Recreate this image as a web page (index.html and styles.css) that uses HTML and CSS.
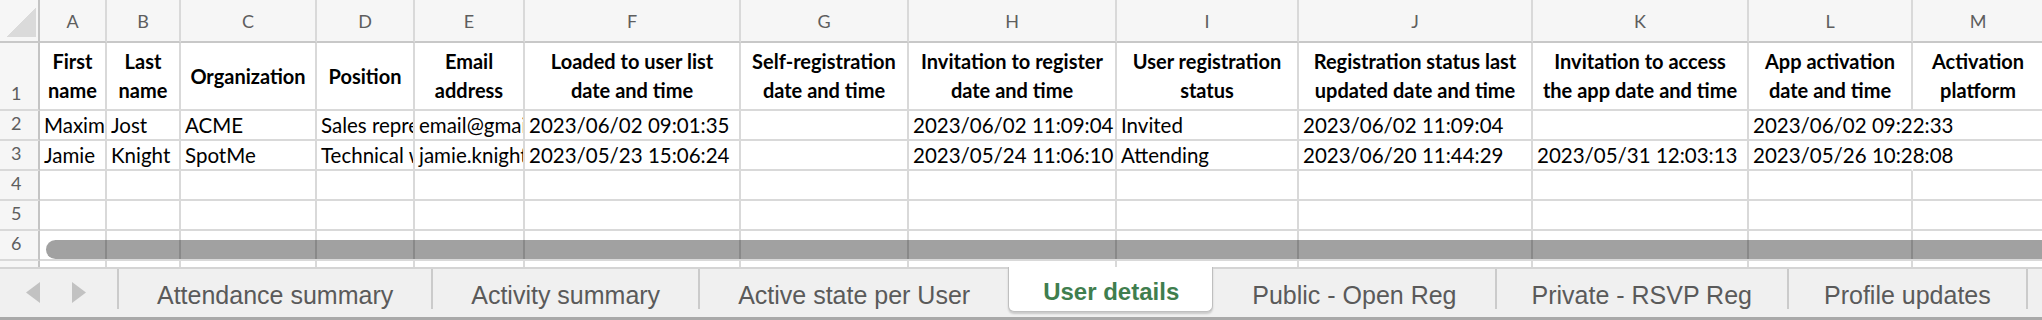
FILE: index.html
```html
<!DOCTYPE html>
<html>
<head>
  <meta charset="utf-8">
  <title>User details</title>
  <link rel="stylesheet" href="styles.css">
</head>
<body>
  <div class="sheet">
    <div class="grid">
      <div class="corner"></div>
      <div class="col">A</div>
      <div class="col">B</div>
      <div class="col">C</div>
      <div class="col">D</div>
      <div class="col">E</div>
      <div class="col">F</div>
      <div class="col">G</div>
      <div class="col">H</div>
      <div class="col">I</div>
      <div class="col">J</div>
      <div class="col">K</div>
      <div class="col">L</div>
      <div class="col">M</div>

      <div class="row">1</div>
      <div class="hd">First<br>name</div>
      <div class="hd">Last<br>name</div>
      <div class="hd">Organization</div>
      <div class="hd">Position</div>
      <div class="hd">Email<br>address</div>
      <div class="hd">Loaded to user list<br>date and time</div>
      <div class="hd">Self-registration<br>date and time</div>
      <div class="hd">Invitation to register<br>date and time</div>
      <div class="hd">User registration<br>status</div>
      <div class="hd">Registration status last<br>updated date and time</div>
      <div class="hd">Invitation to access<br>the app date and time</div>
      <div class="hd">App activation<br>date and time</div>
      <div class="hd">Activation<br>platform</div>

      <div class="row">2</div>
      <div class="c">Maxim</div>
      <div class="c">Jost</div>
      <div class="c">ACME</div>
      <div class="c">Sales representative</div>
      <div class="c">email@gmail.com</div>
      <div class="c">2023/06/02 09:01:35</div>
      <div class="c"></div>
      <div class="c">2023/06/02 11:09:04</div>
      <div class="c">Invited</div>
      <div class="c">2023/06/02 11:09:04</div>
      <div class="c"></div>
      <div class="c spill">2023/06/02 09:22:33</div>
      <div class="c"></div>

      <div class="row">3</div>
      <div class="c">Jamie</div>
      <div class="c">Knight</div>
      <div class="c">SpotMe</div>
      <div class="c">Technical writer</div>
      <div class="c">jamie.knight@spotme.com</div>
      <div class="c">2023/05/23 15:06:24</div>
      <div class="c"></div>
      <div class="c">2023/05/24 11:06:10</div>
      <div class="c">Attending</div>
      <div class="c">2023/06/20 11:44:29</div>
      <div class="c">2023/05/31 12:03:13</div>
      <div class="c spill">2023/05/26 10:28:08</div>
      <div class="c"></div>

      <div class="row">4</div>
      <div class="c"></div><div class="c"></div><div class="c"></div><div class="c"></div>
      <div class="c"></div><div class="c"></div><div class="c"></div><div class="c"></div>
      <div class="c"></div><div class="c"></div><div class="c"></div><div class="c"></div>
      <div class="c"></div>

      <div class="row">5</div>
      <div class="c"></div><div class="c"></div><div class="c"></div><div class="c"></div>
      <div class="c"></div><div class="c"></div><div class="c"></div><div class="c"></div>
      <div class="c"></div><div class="c"></div><div class="c"></div><div class="c"></div>
      <div class="c"></div>

      <div class="row">6</div>
      <div class="c"></div><div class="c"></div><div class="c"></div><div class="c"></div>
      <div class="c"></div><div class="c"></div><div class="c"></div><div class="c"></div>
      <div class="c"></div><div class="c"></div><div class="c"></div><div class="c"></div>
      <div class="c"></div>

      <div class="row">7</div>
      <div class="c"></div><div class="c"></div><div class="c"></div><div class="c"></div>
      <div class="c"></div><div class="c"></div><div class="c"></div><div class="c"></div>
      <div class="c"></div><div class="c"></div><div class="c"></div><div class="c"></div>
      <div class="c"></div>
    </div>
    <div class="hscroll"></div>
  </div>

  <div class="tabbar">
    <div class="nav">
      <svg width="117" height="48" viewBox="0 0 117 48">
        <polygon points="40,13 40,34 26,23.5" fill="#c2c2c2"/>
        <polygon points="72,13 72,34 86,23.5" fill="#c2c2c2"/>
      </svg>
    </div>
    <div class="tab">Attendance summary</div>
    <div class="tab">Activity summary</div>
    <div class="tab">Active state per User</div>
    <div class="tab on">User details</div>
    <div class="tab">Public - Open Reg</div>
    <div class="tab narrow">Private - RSVP Reg</div>
    <div class="tab narrow">Profile updates</div>
    <div class="tab end"></div>
  </div>
</body>
</html>
```

FILE: styles.css
```css
body {
  margin: 0;
  width: 2042px;
  height: 320px;
  overflow: hidden;
  background: #fff;
  font-family: Lato, "Open Sans", sans-serif;
}
.sheet {
  position: relative;
  height: 267px;
  overflow: hidden;
}
.grid {
  display: grid;
  grid-template-columns: 40px 67px 74px 136px 98px 110px 216px 168px 208px 182px 234px 216px 164px 132px;
  grid-template-rows: 43px 68px repeat(6, 30px);
}
.grid > div {
  box-sizing: border-box;
  border-right: 2px solid #d9d9d9;
  border-bottom: 2px solid #d9d9d9;
  overflow: hidden;
  white-space: nowrap;
}
.corner {
  background: #f6f6f6 linear-gradient(to bottom right, transparent 50%, #dadada 50%) 6px 8px / 30px 29px no-repeat;
}
.grid > .corner,
.grid > .col {
  border-bottom-color: #c8c8c8;
}
.grid > .corner,
.grid > .row {
  border-right-color: #c4c4c4;
}
.col {
  background: #f6f6f6;
  color: #5e5e5e;
  font-size: 18px;
  display: flex;
  align-items: center;
  justify-content: center;
}
.row {
  background: #f6f6f6;
  color: #5e5e5e;
  font-size: 18px;
  display: flex;
  align-items: flex-end;
  padding: 0 0 5px 11px;
}
.hd {
  font-weight: 700;
  font-size: 20px;
  line-height: 29px;
  text-align: center;
  display: flex;
  align-items: center;
  justify-content: center;
}
.c {
  font-size: 20.5px;
  display: flex;
  align-items: flex-end;
  padding: 0 0 2px 4px;
}
.grid > .spill {
  overflow: visible;
  border-right-color: transparent;
}
.hscroll {
  position: absolute;
  left: 46px;
  right: -30px;
  top: 240px;
  height: 19px;
  border-radius: 10px;
  background: rgba(0, 0, 0, 0.37);
}

.tabbar {
  display: flex;
  height: 53px;
  box-sizing: border-box;
  background: #f0f0f0;
  border-bottom: 3px solid #a9a9a9;
  font-family: "Liberation Sans", Arial, sans-serif;
  font-size: 25px;
  color: #5a5a5a;
}
.nav {
  flex: none;
  width: 117px;
  border-top: 2px solid #d4d4d4;
}
.nav svg {
  display: block;
}
.tab {
  flex: none;
  box-sizing: border-box;
  height: 50px;
  border-top: 2px solid #d4d4d4;
  padding: 4px 38px 0 40px;
  line-height: 44px;
  white-space: nowrap;
  background: linear-gradient(#cbcbcb, #cbcbcb) left top / 2px 40px no-repeat;
}
.tab.narrow {
  padding: 4px 35px 0 37px;
}
.tab.on {
  height: 45px;
  padding: 4px 33px 0 34px;
  line-height: 41px;
  border: 1px solid #bfbfbf;
  border-top: none;
  border-radius: 0 0 6px 6px;
  background: #fff;
  box-shadow: 0 2px 2px rgba(0, 0, 0, 0.16);
  color: #3f7e4e;
  font-weight: 700;
  font-size: 24px;
}
.tab.on + .tab {
  background: none;
  padding-left: 39px;
}
.tab.end {
  flex: 1;
  padding: 0;
}
```
